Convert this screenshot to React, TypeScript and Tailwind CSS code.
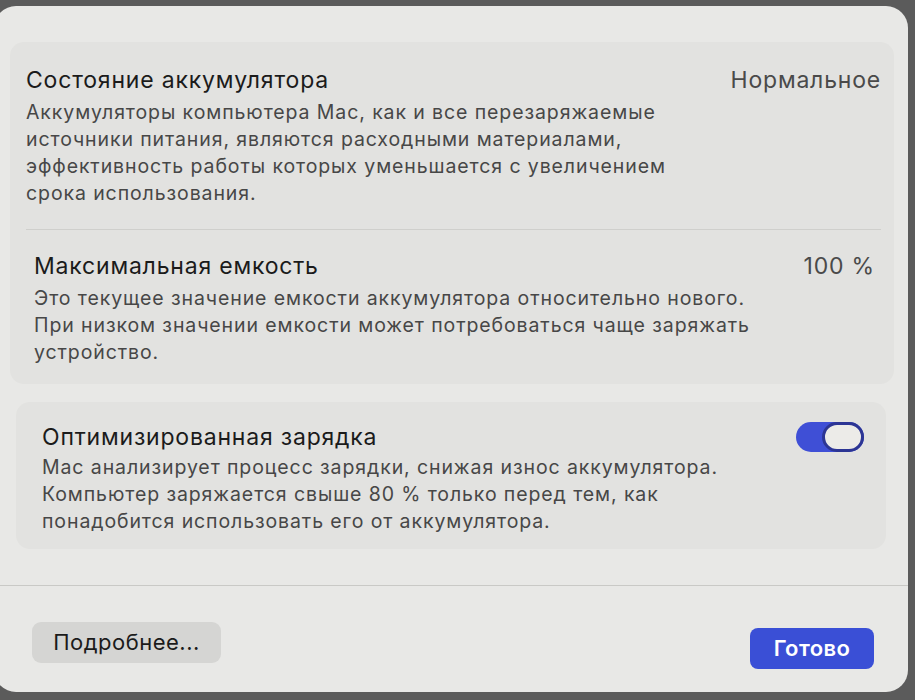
import React from 'react';

const rows = [
  {
    title: 'Состояние аккумулятора',
    value: 'Нормальное',
    indent: 'pl-0 pr-0',
    text: [
      'Аккумуляторы компьютера Мас, как и все перезаряжаемые',
      'источники питания, являются расходными материалами,',
      'эффективность работы которых уменьшается с увеличением',
      'срока использования.',
    ],
  },
  {
    title: 'Максимальная емкость',
    value: '100 %',
    indent: 'pl-[8px] pr-[6px]',
    text: [
      'Это текущее значение емкости аккумулятора относительно нового.',
      'При низком значении емкости может потребоваться чаще заряжать',
      'устройство.',
    ],
  },
];

const Toggle = () => (
  <div className="relative w-[68px] h-[30px] rounded-full bg-[#3f4fd6] shrink-0">
    <div className="absolute right-0 top-0 w-[42px] h-[30px] rounded-full bg-[#ecebe8] border-[3px] border-[#2c3594]" />
  </div>
);

const App = () => {
  return (
    <div
      className="w-[915px] h-[700px] bg-[#5b5b5b] overflow-hidden pt-[6px]"
      style={{ fontFamily: 'Inter, "Noto Sans", sans-serif' }}
    >
      <div className="ml-[-6px] w-[914px] h-[686px] rounded-[22px] bg-[#e8e8e6] flex flex-col">
        {/* battery info group */}
        <div className="mt-[36px] ml-[16px] mr-[14px] rounded-[14px] bg-[#e2e2e0] pl-[16px] pr-[13px] pt-[24px] pb-[18px]">
          {rows.map((row, i) => (
            <div key={row.title}>
              {i > 0 && <div className="h-px bg-[#cfcfcc] mt-[22px] mb-[22px]" />}
              <div className={`flex items-center justify-between ${row.indent}`}>
                <span className="text-[23px] leading-[28px] tracking-[0.8px] text-[#1b1b1b]">{row.title}</span>
                <span className="text-[23px] leading-[28px] tracking-[0.8px] text-[#4a4a4a]">{row.value}</span>
              </div>
              <div className={`mt-[5px] text-[19.5px] leading-[27px] tracking-[0.9px] text-[#474747] ${row.indent}`}>
                {row.text.map((line) => (
                  <div key={line}>{line}</div>
                ))}
              </div>
            </div>
          ))}
        </div>

        {/* optimized charging */}
        <div className="mt-[18px] ml-[22px] mr-[22px] rounded-[14px] bg-[#e2e2e0] pl-[26px] pr-[22px] pt-[20px] pb-[14px]">
          <div className="flex items-center justify-between">
            <span className="text-[23px] leading-[28px] tracking-[0.8px] text-[#1b1b1b]">Оптимизированная зарядка</span>
            <Toggle />
          </div>
          <div className="mt-[2px] text-[19.5px] leading-[27px] tracking-[0.9px] text-[#474747]">
            <div>Мас анализирует процесс зарядки, снижая износ аккумулятора.</div>
            <div>Компьютер заряжается свыше 80 % только перед тем, как</div>
            <div>понадобится использовать его от аккумулятора.</div>
          </div>
        </div>

        <div className="mt-[36px] h-px bg-[#c9c9c6]" />

        <div className="flex items-start justify-between pl-[38px] pr-[34px] pt-[36px]">
          <button className="h-[41px] w-[189px] rounded-[9px] bg-[#d5d5d3] text-[22px] tracking-[0.5px] text-[#1b1b1b]">
            Подробнее...
          </button>
          <button className="mt-[6px] h-[41px] w-[124px] rounded-[8px] bg-[#3a4fd6] text-[22px] tracking-[0.4px] font-semibold text-white">
            Готово
          </button>
        </div>
      </div>
    </div>
  );
};

export default App;
